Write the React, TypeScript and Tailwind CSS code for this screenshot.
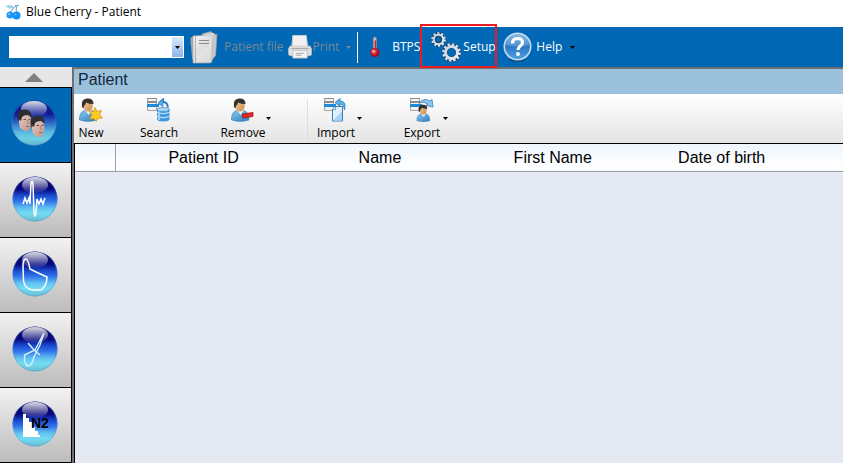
import { useState } from "react";
import type { ReactNode } from "react";
import clsx from "clsx";

// Gradients used by more than one icon live in one hidden svg.
function SharedDefs() {
  return (
    <svg width="0" height="0" className="absolute" aria-hidden="true">
      <defs>
        <linearGradient id="orb" x1="0" y1="0" x2="0" y2="1">
          <stop offset="0" stopColor="#0c0c60" />
          <stop offset="0.28" stopColor="#06067c" />
          <stop offset="0.42" stopColor="#1a48cc" />
          <stop offset="0.55" stopColor="#2f74e8" />
          <stop offset="0.7" stopColor="#62c0f0" />
          <stop offset="0.82" stopColor="#74dcf2" />
          <stop offset="1" stopColor="#68bcd0" />
        </linearGradient>
        <linearGradient id="orbActive" x1="0" y1="0" x2="0" y2="1">
          <stop offset="0" stopColor="#0a1480" />
          <stop offset="0.3" stopColor="#101c98" />
          <stop offset="0.5" stopColor="#2c6cc8" />
          <stop offset="0.7" stopColor="#5cb8e0" />
          <stop offset="0.85" stopColor="#6ed0e4" />
          <stop offset="1" stopColor="#62b4cc" />
        </linearGradient>
        <linearGradient id="gloss" x1="0" y1="0" x2="0" y2="1">
          <stop offset="0" stopColor="#fff" stopOpacity="0.85" />
          <stop offset="1" stopColor="#fff" stopOpacity="0.02" />
        </linearGradient>
        <linearGradient id="face" x1="0" y1="0" x2="1" y2="1">
          <stop offset="0" stopColor="#f0d0c4" />
          <stop offset="1" stopColor="#b8948c" />
        </linearGradient>
        <linearGradient id="shirt" x1="0" y1="0" x2="1" y2="1">
          <stop offset="0" stopColor="#8cc8ee" />
          <stop offset="1" stopColor="#2c7cc0" />
        </linearGradient>
        <linearGradient id="skin" x1="0" y1="0" x2="1" y2="1">
          <stop offset="0" stopColor="#f6cf9c" />
          <stop offset="1" stopColor="#c98a4c" />
        </linearGradient>
        <linearGradient id="paper" x1="0" y1="0" x2="1" y2="1">
          <stop offset="0" stopColor="#f4f4f4" />
          <stop offset="1" stopColor="#c8c8c8" />
        </linearGradient>
        <linearGradient id="steel" x1="0" y1="0" x2="1" y2="1">
          <stop offset="0" stopColor="#c4d4e4" />
          <stop offset="1" stopColor="#e8eef6" />
        </linearGradient>
        <linearGradient id="helpBlue" x1="0" y1="0" x2="0" y2="1">
          <stop offset="0" stopColor="#6db0e4" />
          <stop offset="0.5" stopColor="#2a78c4" />
          <stop offset="1" stopColor="#4ea4e4" />
        </linearGradient>
        <radialGradient id="bulb" cx="0.4" cy="0.4">
          <stop offset="0" stopColor="#ff8a8a" />
          <stop offset="0.6" stopColor="#e01c28" />
          <stop offset="1" stopColor="#a00c18" />
        </radialGradient>
      </defs>
    </svg>
  );
}

function CherryIcon() {
  return (
    <svg width="17" height="16" viewBox="0 0 17 16" fill="none">
      <path d="M5 9C6 6 9 4 12 1M12 10C11 7 11 4 12 1" stroke="#5a9cc0" strokeWidth="1" />
      <path d="M1 2C4 0 8 1 10 4C7 5 3 5 1 2Z" fill="#9cd0e4" />
      <path d="M10 1.500h4" stroke="#7ab4cc" />
      <circle cx="5" cy="11" r="3.500" fill="#1e96f4" />
      <circle cx="11.500" cy="11.500" r="4" fill="#1490f8" />
      <circle cx="4" cy="10" r="1" fill="#8cd0ff" />
      <circle cx="10.500" cy="10.500" r="1" fill="#70c0ff" />
    </svg>
  );
}

function FileIcon() {
  return (
    <svg width="28" height="33" viewBox="0 0 28 33">
      <path d="M12 3L21 0.500L23 3L27 3.500L25.500 25L20 30Z" fill="#c9c9c9" stroke="#a0a0a0" strokeWidth="0.700" />
      <path d="M14 3L24 2L23 28L14 30Z" fill="#ededed" stroke="#b0b0b0" strokeWidth="0.500" />
      <path d="M0.500 7L4 4.500V31L2 27L1 14L0.500 13Z" fill="#a4a8aa" />
      <path d="M3 5L21 4Q23 4 23 6L22 30Q22 32 20 32H3Z" fill="url(#paper)" stroke="#a8a8a8" strokeWidth="0.700" />
      <path d="M5.500 5V32" stroke="#b4b4b4" />
      <path d="M9 9.500H19M9 12.500H19" stroke="#8a8a8a" />
      <path d="M7 25L21 12V31H7Z" fill="#fff" opacity="0.250" />
    </svg>
  );
}

function PrinterIcon() {
  return (
    <svg width="24" height="26" viewBox="0 0 25 26">
      <path d="M5 1H19L20.500 13H4Z" fill="#f0f0f0" stroke="#d0d0d0" />
      <path d="M2 12H23L24.500 15V20Q24.500 22 22.500 22H2.500Q0.500 22 0.500 20V15Z" fill="#e0e0e0" stroke="#c4c4c4" strokeWidth="0.700" />
      <path d="M3 14.500H22" stroke="#a4a4a4" />
      <path d="M5 16.500H20V24.500H5Z" fill="#f6f6f6" stroke="#c0c0c0" />
      <path d="M8 19.500H17M8 21.500H14" stroke="#a0a0a0" />
    </svg>
  );
}

function ThermometerIcon() {
  return (
    <svg width="15" height="32" viewBox="0 0 15 32">
      <path d="M5 3Q5 0.500 7.500 0.500Q10 0.500 10 3V20H5Z" fill="#b9aeb4" stroke="#8c7780" strokeWidth="0.700" />
      <path d="M7.500 6V22" stroke="#c81420" strokeWidth="3" />
      <path d="M6.500 3V18" stroke="#f4e4e4" strokeWidth="1" />
      <circle cx="7.500" cy="24.500" r="6.800" fill="url(#bulb)" />
      <ellipse cx="5" cy="22.500" rx="2" ry="1.500" fill="#ffd0d0" opacity="0.800" />
    </svg>
  );
}

function GearsIcon() {
  return (
    <svg width="30" height="30" viewBox="0 0 30 30" fill="none">
      <circle cx="7.500" cy="7.500" r="5" stroke="#1c4468" strokeWidth="5" />
      <circle cx="7.500" cy="7.500" r="6.200" stroke="url(#steel)" strokeWidth="2.200" strokeDasharray="2.100 1.796" />
      <circle cx="7.500" cy="7.500" r="4.700" stroke="url(#steel)" strokeWidth="2" />
      <circle cx="20.500" cy="20.500" r="6.800" stroke="#1c4468" strokeWidth="5.600" />
      <circle cx="20.500" cy="20.500" r="8" stroke="url(#steel)" strokeWidth="2.600" strokeDasharray="2.400 1.789" />
      <circle cx="20.500" cy="20.500" r="6" stroke="url(#steel)" strokeWidth="2.800" />
    </svg>
  );
}

function HelpIcon() {
  return (
    <svg width="29" height="30" viewBox="0 0 29 30">
      <ellipse cx="14.500" cy="27.500" rx="9" ry="2" fill="#0a4c80" />
      <circle cx="14.500" cy="14.500" r="13.200" fill="url(#helpBlue)" stroke="#c4dcf0" strokeWidth="1.600" />
      <path d="M3 13A11.500 11.500 0 0 1 26 13Q14 16 3 13Z" fill="#fff" opacity="0.180" />
      <path d="M9.500 11.500Q9.500 6.500 14.500 6.500Q19.500 6.500 19.500 10.500Q19.500 12.500 17 14.300Q15 15.800 15 18" fill="none" stroke="#fff" strokeWidth="3.200" />
      <circle cx="15" cy="22" r="2" fill="#fff" />
    </svg>
  );
}

function Person() {
  return (
    <>
      <path d="M0.500 22Q0 14 6 12.500H13Q18 14 18 22Q9 25 0.500 22Z" fill="url(#shirt)" stroke="#3a80b8" strokeWidth="0.600" />
      <path d="M6 12L9.500 17L13 12Z" fill="#e8f2fa" />
      <ellipse cx="9" cy="7.500" rx="4.800" ry="6" fill="url(#skin)" />
      <path d="M3 9Q1.500 1 8 0.500Q14.500 0 14.500 6Q10 6 7 4.500Q6.500 7 5 7.500L4.500 10.500Z" fill="#34302e" />
    </>
  );
}

function NewIcon() {
  return (
    <svg width="24" height="24" viewBox="0 0 24 24">
      <Person />
      <path d="M16 9.500L18 13.500L22.500 12.500L20.500 16.500L23.500 20L19 20.200L17 23.500L14.800 20.500L10.500 21L13 17L10.500 13.500L14.500 13.800Z" fill="#fccb24" stroke="#dc9414" strokeWidth="0.800" />
    </svg>
  );
}

function RemoveIcon() {
  return (
    <svg width="24" height="24" viewBox="0 0 24 24">
      <Person />
      <path d="M11.500 16L22 14.500V18.500L11.500 20Z" fill="#e02824" stroke="#a81414" strokeWidth="0.800" />
    </svg>
  );
}

// Striped rows behind the search, import and export glyphs.
function Rows() {
  return (
    <>
      <path d="M0.500 0.500H9.500V12.500H0.500Z" fill="#f2f2f2" stroke="#a4a4a4" />
      <path d="M0 0H10V1H0ZM0 3H10V5H0Z" fill="#8c8c8c" />
      <path d="M0 6H12V9H0Z" fill="#1c8ad8" />
    </>
  );
}

function SearchIcon() {
  return (
    <svg width="24" height="24" viewBox="0 0 24 24">
      <Rows />
      <path d="M10 11V21Q10 23.500 16 23.500Q22.500 23.500 22.500 21V11Z" fill="#4298da" />
      <path d="M10 14.500Q16 17 22.500 14.500M10 18.500Q16 21 22.500 18.500" stroke="#d4ebfa" fill="none" />
      <path d="M12 12V22" stroke="#9cd0f4" strokeWidth="2" />
      <ellipse cx="16.200" cy="11.500" rx="6.200" ry="2" fill="#a8d8f6" stroke="#3a88c4" strokeWidth="0.700" />
      <path d="M12 5L16 1.500V4Q20.500 4 21 9.500" fill="none" stroke="#2a7cc0" strokeWidth="1.800" />
      <path d="M11 5.500L16 1V8.500Z" fill="#5ab0e8" stroke="#2272b4" strokeWidth="0.700" />
    </svg>
  );
}

function ImportIcon() {
  return (
    <svg width="24" height="24" viewBox="0 0 24 24">
      <Rows />
      <path d="M11 4.500L16 0.500V3Q23 3 20.500 12Q20 6.500 16 6V8.500Z" fill="#5ab0e8" stroke="#2272b4" strokeWidth="0.700" />
      <path d="M8.500 11L11.500 8.500H18.500V23H8.500Z" fill="#e0f0fc" stroke="#3c80b8" />
      <path d="M9 22.500L18 13V22.500Z" fill="#a8d4f4" />
      <path d="M8.500 11.500H11.500V8.500" fill="#fff" stroke="#3c80b8" strokeWidth="0.700" />
    </svg>
  );
}

function ExportIcon() {
  return (
    <svg width="24" height="24" viewBox="0 0 24 24">
      <Rows />
      <path d="M9 5Q14 -1 20 3L22 1.500L23 9L16 7.500L18 6Q14 3 9 5Z" fill="#8cc8f0" stroke="#2272b4" strokeWidth="0.700" />
      <g transform="translate(6.500 6.500) scale(0.740)">
        <Person />
      </g>
    </svg>
  );
}

function Caret({ className }: { className?: string }) {
  return (
    <svg width="5" height="3" viewBox="0 0 5 3" className={className} fill="currentColor">
      <path d="M0 0H5L2.500 3Z" />
    </svg>
  );
}

function Orb({ active, children }: { active?: boolean; children: ReactNode }) {
  return (
    <svg width="46" height="46" viewBox="0 0 46 46" fill="none">
      <circle cx="23" cy="23" r="22.500" fill={active ? "url(#orbActive)" : "url(#orb)"} />
      <circle cx="23" cy="23" r="22" stroke="#5f84c8" strokeOpacity="0.400" />
      <ellipse cx="23" cy="9" rx="13" ry="8" fill="url(#gloss)" />
      {children}
    </svg>
  );
}

function Face({ x, y }: { x: number; y: number }) {
  return (
    <g transform={`translate(${x} ${y})`}>
      <path d="M1 8L3 19L8 22Q11 23 13 20L14.500 14L14 7L8 4Z" fill="url(#face)" />
      <path d="M1 11Q-1.500 3 5 0.800Q13 -1 14.500 6L14 9Q13 6.500 10.500 6Q7 6 5 8L4 12L2.500 10.500L2 13Z" fill="#2e2c34" />
      <path d="M6.500 10.500H9M11.500 10.500H13.500" stroke="#6c4c48" />
      <path d="M10.500 11V14.500H12" stroke="#a87c74" strokeWidth="0.800" />
      <path d="M9 17.500H12.500" stroke="#a8605c" />
    </g>
  );
}

const modules: { id: string; label: string; art: ReactNode }[] = [
  {
    id: "patient",
    label: "Patients",
    art: (
      <>
        <Face x={6} y={9} />
        <Face x={19} y={15} />
      </>
    ),
  },
  {
    id: "spirometry",
    label: "Slow spirometry",
    art: (
      <path d="M11 28L13 22L15 27L17 22L18 28L19 7Q20 3 21 8L22 37Q23 43 24 37L25 23L27 28L29 23L31 28L33 22" stroke="#fff" strokeWidth="1.500" />
    ),
  },
  {
    id: "flow",
    label: "Flow volume",
    art: (
      <path d="M14 8Q11 8 11 15L11.500 30Q13 39 22 39H29Q35 35 35 26L24 21L18 18Q16 8 14 8Z" stroke="#fff" strokeWidth="1.500" />
    ),
  },
  {
    id: "resistance",
    label: "Resistance",
    art: (
      <path d="M32 7L28 19L22 31Q20 40 16 40Q12 39 12.500 29L23 24L32 7M16 17L22 24L28 29" stroke="#d4f0ff" strokeWidth="1.400" />
    ),
  },
  {
    id: "washout",
    label: "Nitrogen washout",
    art: (
      <>
        <path d="M11 13H14V17H17V21H20V26H23V30H26V34H28V36H11Z" fill="#fff" />
        <text x="19" y="27" fill="#000" className="font-['Liberation_Sans',sans-serif] text-[14px] font-bold">
          N2
        </text>
      </>
    ),
  },
];

const actions = [
  { label: "New", icon: <NewIcon />, menu: false, box: "w-8 ml-px" },
  { label: "Search", icon: <SearchIcon />, menu: false, box: "w-12 ml-7" },
  { label: "Remove", icon: <RemoveIcon />, menu: true, box: "w-12 ml-9" },
  { label: "Import", icon: <ImportIcon />, menu: true, box: "w-11 ml-1.5" },
  { label: "Export", icon: <ExportIcon />, menu: true, box: "w-11 ml-[38px]" },
];

function Sidebar({ current, onSelect }: { current: string; onSelect: (id: string) => void }) {
  return (
    <nav className="w-[72px] shrink-0 bg-[#e6e6e6]">
      <button aria-label="Scroll up" className="flex h-5 w-full items-center justify-center">
        <svg width="18" height="9" viewBox="0 0 18 9" className="-ml-1">
          <path d="M0 9L9 0L18 9Z" fill="#808080" />
        </svg>
      </button>
      {modules.map((m) => (
        <button
          key={m.id}
          aria-label={m.label}
          onClick={() => onSelect(m.id)}
          className={clsx(
            "flex h-[75px] w-full items-center justify-center border-t border-r border-black",
            m.id === current
              ? "bg-[#0068b4] pr-1 pb-1"
              : "bg-linear-to-b from-[#f2f2f2] to-[#bcbcbc] pr-0.5 pb-0.5",
          )}
        >
          <Orb active={m.id === current}>{m.art}</Orb>
        </button>
      ))}
      <div className="border-t border-black" />
    </nav>
  );
}

function TopBar() {
  return (
    <div className="flex h-10 items-center bg-[#0068b4] pl-[9px] text-white">
      <div className="relative h-[22px] w-[175px] shrink-0">
        <select aria-label="Patient" className="h-full w-full appearance-none bg-white px-1 text-black">
          <option></option>
        </select>
        <span className="pointer-events-none absolute inset-y-px right-px flex w-[11px] items-center justify-center bg-linear-to-b from-[#dbe8fc] to-[#8fb4ea] text-black">
          <Caret />
        </span>
      </div>
      <button disabled className="ml-1.5 flex shrink-0 items-center gap-1.5 text-[#7b8794]">
        <FileIcon />
        Patient file
      </button>
      <button disabled className="ml-1 flex shrink-0 items-center gap-px text-[#7b8794]">
        <PrinterIcon />
        Print
        <Caret className="ml-1.5" />
      </button>
      <div className="ml-1.5 h-[31px] w-px shrink-0 bg-white" />
      <button className="ml-3 flex w-[50px] shrink-0 items-center gap-3 overflow-hidden">
        <ThermometerIcon />
        BTPS
      </button>
      <button className="relative flex w-[77px] shrink-0 items-center gap-0.5 pl-[11px]">
        <GearsIcon />
        Setup
        <span className="absolute inset-x-0 -top-2 -bottom-1.5 border-2 border-[#ed1c24]" />
      </button>
      <button className="ml-1.5 flex shrink-0 items-center gap-1">
        <HelpIcon />
        Help
        <Caret className="ml-1 text-black" />
      </button>
    </div>
  );
}

function ActionBar() {
  return (
    <div className="flex h-[49px] items-start bg-linear-to-b from-white to-[#e4e4e4] pt-1 text-black">
      {actions.map((a) => (
        <div key={a.label} className="flex items-start">
          {a.label === "Import" && <div className="ml-9 mt-px h-10 w-px bg-[#d0e0f4]" />}
          <button className={clsx("flex flex-col items-center", a.box)}>
            {a.icon}
            <span className="mt-[3px] leading-4">{a.label}</span>
          </button>
          {a.menu && (
            <button aria-label={`${a.label} options`} className="-ml-px mt-[19px] w-[5px]">
              <Caret />
            </button>
          )}
        </div>
      ))}
    </div>
  );
}

function PatientTable() {
  return (
    <table className="w-full table-fixed border-collapse text-base text-black">
      <colgroup>
        <col className="w-10" />
        <col className="w-[23%]" />
        <col className="w-[23%]" />
        <col className="w-[22%]" />
        <col className="w-[22%]" />
        <col />
      </colgroup>
      <thead>
        <tr className="h-[27px] border-b border-[#a0a0a0] bg-linear-to-b from-[#f0f6fe] to-white font-['Liberation_Sans',sans-serif]">
          <td className="border-r border-[#a0a0a0] p-0" />
          <th className="p-0 pt-0.5 font-normal">Patient ID</th>
          <th className="p-0 pt-0.5 font-normal">Name</th>
          <th className="p-0 pt-0.5 font-normal">First Name</th>
          <th className="p-0 pt-0.5 font-normal">Date of birth</th>
          <td className="p-0" />
        </tr>
      </thead>
      <tbody />
    </table>
  );
}

export default function App() {
  const [current, setCurrent] = useState("patient");

  return (
    <div className="flex h-screen flex-col overflow-hidden bg-white font-['Open_Sans',sans-serif] text-[12px]">
      <SharedDefs />
      <header className="flex h-[27px] shrink-0 items-center gap-1 pb-1 pl-[5px] text-black">
        <CherryIcon />
        <h1>Blue Cherry - Patient</h1>
      </header>
      <TopBar />
      <div className="flex min-h-0 flex-1">
        <Sidebar current={current} onSelect={setCurrent} />
        <main className="flex min-w-0 flex-1 flex-col border-l-2 border-t-2 border-[#707070] bg-[#e5e9f2]">
          <h2 className="h-[25px] bg-[#9bc1dd] pl-1 font-['Liberation_Sans',sans-serif] text-base leading-[22px] text-[#14283c]">
            Patient
          </h2>
          <ActionBar />
          <div className="flex-1 border-l border-t border-black">
            <PatientTable />
          </div>
        </main>
      </div>
    </div>
  );
}
